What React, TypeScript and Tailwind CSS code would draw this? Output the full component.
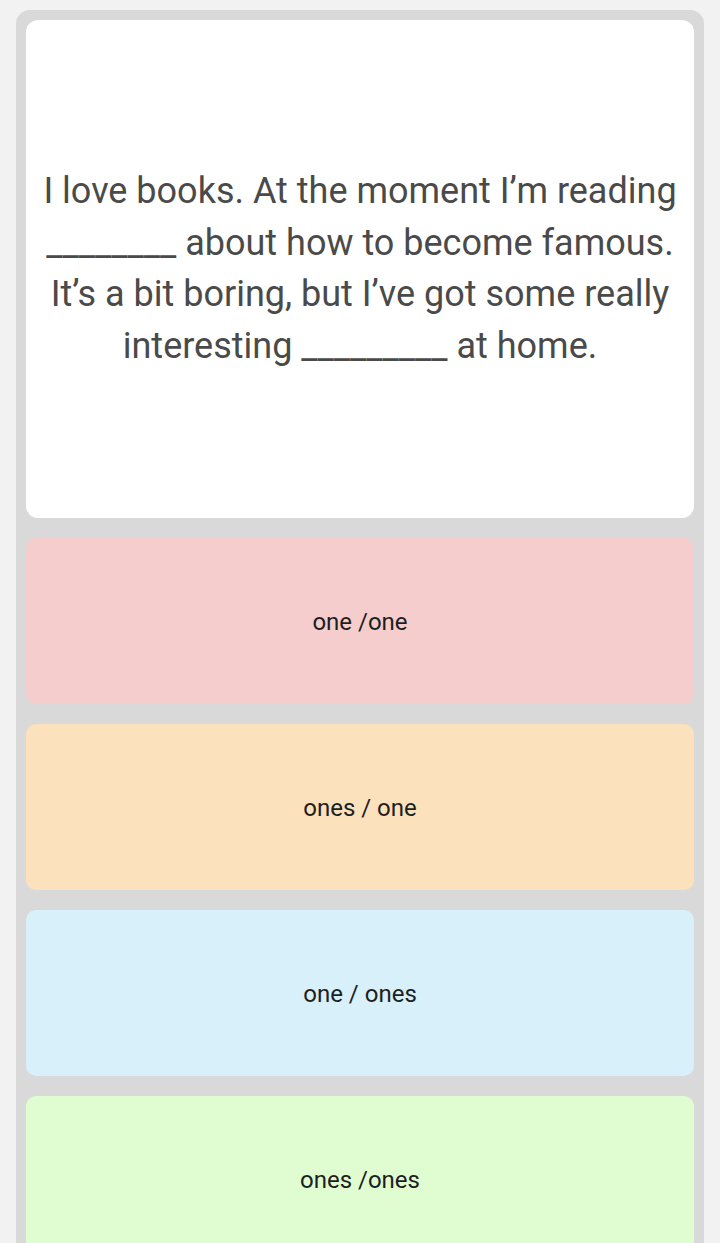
const options = [
  { label: "one /one", bg: "bg-[#f6cdcd]" },
  { label: "ones / one", bg: "bg-[#fbe2bc]" },
  { label: "one / ones", bg: "bg-[#d8f0fa]" },
  { label: "ones /ones", bg: "bg-[#e0fdd2]" },
];

export default function App() {
  return (
    <div className="min-h-[1243px] bg-[#f2f2f2] px-4 pt-[10px] font-['Roboto',sans-serif]">
      <div className="rounded-t-[14px] bg-[#d9d9d9] px-[10px] pt-[10px] flex flex-col gap-5 h-[1233px] overflow-hidden">
        <div className="bg-white rounded-xl h-[498px] shrink-0 flex items-center justify-center px-3">
          <p className="text-center text-[36px] leading-[51.5px] text-[#4a4a4a]">
            I love books. At the moment I’m reading ________ about how to become famous. It’s a bit
            boring, but I’ve got some really interesting _________ at home.
          </p>
        </div>
        {options.map((o) => (
          <div
            key={o.label}
            className={`${o.bg} rounded-[10px] h-[166px] shrink-0 flex items-center justify-center pt-[2px]`}
          >
            <span className="text-[24px] text-[#1e1e1e]">{o.label}</span>
          </div>
        ))}
      </div>
    </div>
  );
}
